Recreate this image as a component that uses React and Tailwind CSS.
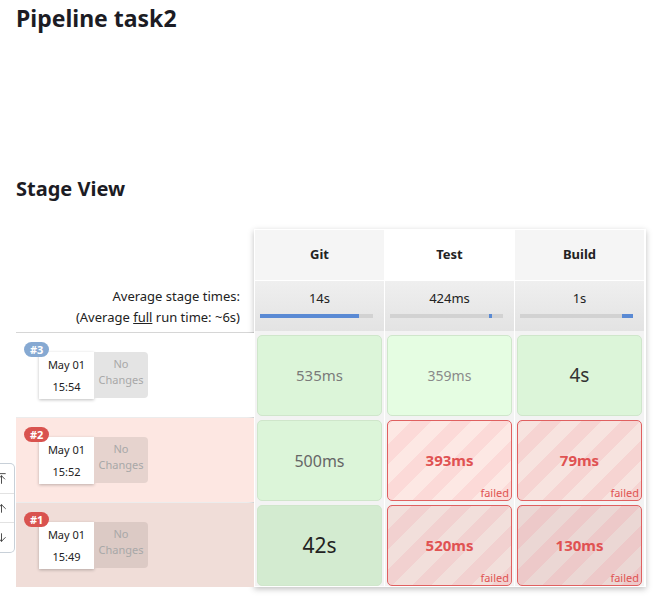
import React from 'react';
import { ArrowUpToLine, ArrowUp, ArrowDown } from 'lucide-react';

const stages = ['Git', 'Test', 'Build'];

const averages = [
  { label: '14s', fill: 'w-[99px]', ml: 'ml-0' },
  { label: '424ms', fill: 'w-[3px]', ml: 'ml-[99px]' },
  { label: '1s', fill: 'w-[11px]', ml: 'ml-[102px]' },
];

const runs = [
  {
    id: '#3',
    badge: 'bg-[#86a9d2]',
    rowBg: 'bg-white',
    noChanges: 'bg-[#e4e4e4]',
    time: '15:54',
    cells: [
      { text: '535ms', kind: 'ok', size: 'text-[15px] text-[#7a7a7a]', bg: 'bg-[#dcf5d9]' },
      { text: '359ms', kind: 'ok', size: 'text-[14px] text-[#8a8a8a]', bg: 'bg-[#e5fde2]' },
      { text: '4s', kind: 'ok', size: 'text-[19px] text-[#333]', bg: 'bg-[#dcf5d9]' },
    ],
  },
  {
    id: '#2',
    badge: 'bg-[#d9534f]',
    rowBg: 'bg-[#fde7e2]',
    noChanges: 'bg-[#e6d3ce]',
    time: '15:52',
    cells: [
      { text: '500ms', kind: 'ok', size: 'text-[16px] text-[#666]', bg: 'bg-[#dcf5d9]' },
      { text: '393ms', kind: 'fail', stripes: 'bg-[repeating-linear-gradient(-45deg,#fcdad8_0px,#fcdad8_14px,#fde8e4_14px,#fde8e4_28px)]' },
      { text: '79ms', kind: 'fail', stripes: 'bg-[repeating-linear-gradient(-45deg,#f6d4d2_0px,#f6d4d2_14px,#f7e3df_14px,#f7e3df_28px)]' },
    ],
  },
  {
    id: '#1',
    badge: 'bg-[#d9534f]',
    rowBg: 'bg-[#f0ddd8]',
    noChanges: 'bg-[#dccac5]',
    time: '15:49',
    cells: [
      { text: '42s', kind: 'ok', size: 'text-[21px] text-[#222]', bg: 'bg-[#d3ebd0]' },
      { text: '520ms', kind: 'fail', stripes: 'bg-[repeating-linear-gradient(-45deg,#f2d1d0_0px,#f2d1d0_14px,#f2dfdb_14px,#f2dfdb_28px)]' },
      { text: '130ms', kind: 'fail', stripes: 'bg-[repeating-linear-gradient(-45deg,#edc9c9_0px,#edc9c9_14px,#ebd7d4_14px,#ebd7d4_28px)]' },
    ],
  },
];

function RunLabel({ run }) {
  return (
    <div className={`relative h-[84px] ${run.rowBg} pl-[23px] pt-[19px]`}>
      <span
        className={`absolute left-[8px] top-[9px] rounded-full ${run.badge} px-[6px] text-[11px] font-bold leading-[15px] text-white`}
      >
        {run.id}
      </span>
      <div className="flex">
        <div className="flex h-[47px] w-[55px] flex-col items-center justify-center gap-[10px] bg-white pt-[1px] text-[11px] leading-[12px] text-[#222] shadow-[0_1px_3px_rgba(0,0,0,0.25)]">
          <span>May 01</span>
          <span>{run.time}</span>
        </div>
        <div
          className={`flex h-[46px] w-[54px] flex-col items-center justify-center rounded-r-[4px] ${run.noChanges} pb-[6px] text-[11px] leading-[16px] text-[#a8a8a8]`}
        >
          <span>No</span>
          <span>Changes</span>
        </div>
      </div>
    </div>
  );
}

function StageCell({ cell }) {
  if (cell.kind === 'fail') {
    return (
      <div
        className={`relative mx-[2px] flex h-[81px] items-center justify-center rounded-[5px] border border-[#e06060] ${cell.stripes}`}
      >
        <span className="text-[15px] font-bold text-[#e05252]">{cell.text}</span>
        <span className="absolute bottom-[1px] right-[2px] text-[11px] leading-[13px] text-[#e05252]">failed</span>
      </div>
    );
  }
  return (
    <div
      className={`mx-[2px] flex h-[81px] items-center justify-center rounded-[5px] border border-[#cfe6cb] ${cell.bg}`}
    >
      <span className={cell.size}>{cell.text}</span>
    </div>
  );
}

export default function App() {
  return (
    <div className="relative min-h-[605px] bg-white pl-4 font-['Noto_Sans',sans-serif] text-[#333]">
      <h1 className="pt-[2px] text-[23px] font-bold leading-[32px] text-[#1c1c24]">Pipeline task2</h1>
      <h2 className="mt-[141px] text-[20px] font-bold leading-[28px] text-[#1c1c24]">Stage View</h2>

      <div className="mt-[26px] flex">
        <div className="w-[238px] pt-[53px]">
          <div className="flex h-[50px] flex-col items-end justify-center pr-[14px] text-[13px] leading-[21px] text-[#222]">
            <span>Average stage times:</span>
            <span>
              (Average <span className="underline">full</span> run time: ~6s)
            </span>
          </div>
          <div className="border-t border-[#d6d6d6]">
            {runs.map((run) => (
              <div key={run.id} className="border-b border-[#ececec] last:border-b-0">
                <RunLabel run={run} />
              </div>
            ))}
          </div>
        </div>

        <div className="w-[392px] bg-white p-[1px] shadow-[0_2px_6px_rgba(0,0,0,0.25)]">
          <div className="grid grid-cols-3">
            {stages.map((s, i) => (
              <div
                key={s}
                className={`mr-[1px] flex h-[50px] items-center justify-center text-[13px] font-bold text-[#222] ${
                  i === 1 ? 'bg-white' : 'bg-[#f5f5f5]'
                }`}
              >
                {s}
              </div>
            ))}
            {averages.map((a) => (
              <div
                key={a.label}
                className="mr-[1px] mt-[1px] flex h-[50px] flex-col items-start bg-gradient-to-b from-[#efefef] to-[#e3e3e3] pt-[8px]"
              >
                <span className="self-center text-[13px] leading-[18px] text-[#222]">{a.label}</span>
                <div className="ml-[5px] mt-[7px] h-[4px] w-[113px] bg-[#d2d2d2]">
                  <div className={`h-[4px] ${a.fill} ${a.ml} bg-[#5a8ad4]`} />
                </div>
              </div>
            ))}
            {runs.map((run) =>
              run.cells.map((cell, i) => (
                <div key={run.id + i} className="mr-[1px] bg-[#f3f3f3] pt-[4px]">
                  <StageCell cell={cell} />
                </div>
              ))
            )}
          </div>
        </div>
      </div>

      <div className="absolute left-0 top-[463px] flex w-[15px] flex-col overflow-hidden rounded-r-[5px] border border-l-0 border-[#c8d0d8] bg-white text-[#333]">
        <div className="flex h-[30px] items-center border-b border-[#e2e2e2]">
          <ArrowUpToLine size={13} strokeWidth={1.6} className="-ml-[5px] shrink-0" />
        </div>
        <div className="flex h-[29px] items-center border-b border-[#e2e2e2]">
          <ArrowUp size={13} strokeWidth={1.6} className="-ml-[5px] shrink-0" />
        </div>
        <div className="flex h-[29px] items-center">
          <ArrowDown size={13} strokeWidth={1.6} className="-ml-[5px] shrink-0" />
        </div>
      </div>
    </div>
  );
}
